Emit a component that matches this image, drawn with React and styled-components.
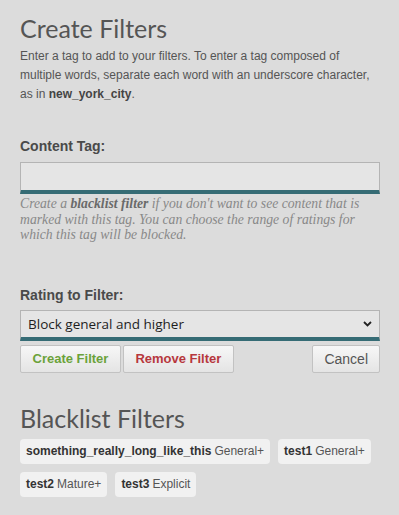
import React, { useState } from 'react';
import styled, { createGlobalStyle } from 'styled-components';

const GlobalStyle = createGlobalStyle`
  html, body {
    margin: 0;
    padding: 0;
    background: #dcdcdc;
  }
`;

const Page = styled.div`
  padding: 0 19px 20px 20px;
  font-family: 'Liberation Sans', Arial, sans-serif;
  color: #555;
`;

const Heading = styled.h1`
  margin: ${(props) => props.$top || 0}px 0 0;
  font-family: Lato, 'Open Sans', sans-serif;
  font-weight: 400;
  font-size: 25px;
  line-height: 30px;
  color: #555;
`;

const Intro = styled.p`
  margin: 4px 0 0;
  font-size: 12px;
  line-height: 19px;
  color: #555;

  b {
    color: #444;
  }
`;

const Label = styled.label`
  display: block;
  margin-top: ${(props) => props.$top}px;
  font-size: 14px;
  font-weight: bold;
  line-height: 17px;
  color: #4a4a4a;
`;

const TextInput = styled.input`
  display: block;
  box-sizing: border-box;
  width: 100%;
  height: 32px;
  margin-top: 7px;
  padding: 0 8px;
  background: #e5e5e5;
  border: 1px solid #b4b4b4;
  border-bottom: 4px solid #366c75;
  outline: none;
  font-family: 'Open Sans', sans-serif;
  font-size: 13.5px;
  color: #222;
`;

const Hint = styled.p`
  margin: 2px 0 0;
  font-family: 'Liberation Serif', 'Times New Roman', serif;
  font-style: italic;
  font-size: 13.7px;
  line-height: 15.5px;
  color: #888;

  b {
    color: #6a6a6a;
  }
`;

const SelectWrap = styled.div`
  position: relative;
  margin-top: 6px;
`;

const Select = styled.select`
  display: block;
  box-sizing: border-box;
  width: 100%;
  height: 31px;
  padding: 0 24px 0 7px;
  appearance: none;
  background: #e5e5e5;
  border: 1px solid #b4b4b4;
  border-bottom: 4px solid #366c75;
  border-radius: 0;
  outline: none;
  font-family: 'Open Sans', sans-serif;
  font-size: 13.5px;
  color: #1e1e1e;
`;

const Chevron = styled.svg`
  position: absolute;
  right: 8px;
  top: 11px;
  pointer-events: none;
`;

const ButtonRow = styled.div`
  display: flex;
  gap: 2px;
  margin-top: 4px;
`;

const Button = styled.button`
  box-sizing: border-box;
  height: 28px;
  padding: 0 ${(props) => (props.$plain ? '11px' : '11.5px')};
  margin-left: ${(props) => (props.$push ? 'auto' : '0')};
  background: linear-gradient(#f7f7f7, #e4e4e4);
  border: 1px solid #c2c2c2;
  border-radius: 2px;
  font-family: 'Liberation Sans', Arial, sans-serif;
  font-size: ${(props) => (props.$plain ? '14px' : '13px')};
  font-weight: ${(props) => (props.$plain ? 'normal' : 'bold')};
  color: ${(props) => props.$color || '#555'};
  cursor: pointer;
`;

const TagList = styled.div`
  display: flex;
  flex-wrap: wrap;
  gap: 8px;
  margin-top: 6px;
`;

const Tag = styled.span`
  display: inline-flex;
  align-items: center;
  height: 25px;
  padding: 0 6px;
  background: #f1f1f1;
  border-radius: 4px;
  font-size: 12px;
  color: #555;
  white-space: nowrap;

  b {
    color: #333;
    margin-right: 3px;
  }
`;

const filters = [
  { tag: 'something_really_long_like_this', rating: 'General+' },
  { tag: 'test1', rating: 'General+' },
  { tag: 'test2', rating: 'Mature+' },
  { tag: 'test3', rating: 'Explicit' },
];

const App = () => {
  const [tag, setTag] = useState('');
  const [rating, setRating] = useState('general');

  return (
    <Page>
      <GlobalStyle />
      <Heading $top={13}>Create Filters</Heading>
      <Intro>
        Enter a tag to add to your filters. To enter a tag composed of multiple words,
        separate each word with an underscore character, as in <b>new_york_city</b>.
      </Intro>

      <Label $top={34}>Content Tag:</Label>
      <TextInput value={tag} onChange={(e) => setTag(e.target.value)} />
      <Hint>
        Create a <b>blacklist filter</b> if you don't want to see content that is marked
        with this tag. You can choose the range of ratings for which this tag will be
        blocked.
      </Hint>

      <Label $top={44}>Rating to Filter:</Label>
      <SelectWrap>
        <Select value={rating} onChange={(e) => setRating(e.target.value)}>
          <option value="general">Block general and higher</option>
          <option value="mature">Block mature and higher</option>
          <option value="explicit">Block explicit</option>
        </Select>
        <Chevron width="9" height="6" viewBox="0 0 9 6">
          <path d="M1 1l3.5 3.5L8 1" fill="none" stroke="#222" strokeWidth="1.8" />
        </Chevron>
      </SelectWrap>

      <ButtonRow>
        <Button $color="#6ba23a">Create Filter</Button>
        <Button $color="#b7373d">Remove Filter</Button>
        <Button $plain $push>Cancel</Button>
      </ButtonRow>

      <Heading $top={30}>Blacklist Filters</Heading>
      <TagList>
        {filters.map((f) => (
          <Tag key={f.tag}>
            <b>{f.tag}</b>
            {f.rating}
          </Tag>
        ))}
      </TagList>
    </Page>
  );
};

export default App;
